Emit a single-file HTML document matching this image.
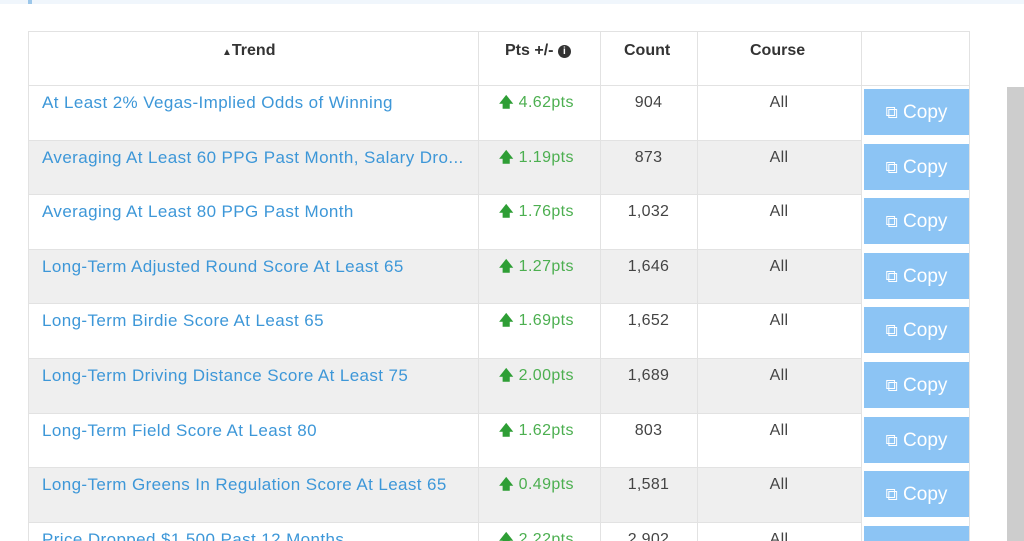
<!DOCTYPE html>
<html style="overflow:hidden"><head><style>
html,body{margin:0;width:1024px;height:541px;overflow:hidden}
body{background:#fff;font-family:"Liberation Sans",sans-serif;position:relative}
.top{position:absolute;left:0;top:0;width:1024px;height:4px;background:#f0f6fc}
.acc{position:absolute;left:28px;top:0;width:4px;height:4px;background:#9cc7ea}
.vl{position:absolute;top:31px;width:1px;height:510px;background:#e2e2e2}
.hl{position:absolute;left:28px;width:942px;height:1px;background:#e2e2e2}
.stripe{position:absolute;left:29px;width:832px;height:54px;background:#efefef}
.t{position:absolute;font-size:16px;white-space:nowrap}
.h{font-weight:bold;color:#333;font-size:16px;top:42px}
.lnk{color:#3d97d8;left:42px;font-size:17px;letter-spacing:0.4px}
.pts{color:#4caf50;left:499px;letter-spacing:0.4px}
.pts b{color:#2e9e35;font-size:14px}
.c{color:#444;text-align:center;letter-spacing:0.3px}
.btn{position:absolute;left:864px;width:105px;height:46px;background:#8cc4f4;color:#fff;font-size:19px;line-height:48px;text-align:center}
.sb{position:absolute;left:1007px;top:87px;width:17px;height:454px;background:#cdcdcd}
</style></head><body>
<div class="top"></div><div class="acc"></div>
<div class="hl" style="top:31px"></div>
<div class="hl" style="top:85px"></div>
<div class="stripe" style="top:141px"></div>
<div class="stripe" style="top:250px"></div>
<div class="stripe" style="top:359px"></div>
<div class="stripe" style="top:468px"></div>
<div class="vl" style="left:28px"></div>
<div class="vl" style="left:478px"></div>
<div class="vl" style="left:600px"></div>
<div class="vl" style="left:697px"></div>
<div class="vl" style="left:861px"></div>
<div class="vl" style="left:969px"></div>
<div class="sb"></div>
<div class="t h" style="left:222px"><span style="font-size:10px">▲</span>Trend</div>
<div class="t h" style="left:505px">Pts +/- <span style="display:inline-block;width:13px;height:13px;border-radius:50%;background:#333;color:#fff;font-size:10px;line-height:13px;text-align:center;vertical-align:1px">i</span></div>
<div class="t h" style="left:624px">Count</div>
<div class="t h" style="left:750px">Course</div>
<div id="rows"></div>
<script>
var d=[["At Least 2% Vegas-Implied Odds of Winning","4.62","904"],["Averaging At Least 60 PPG Past Month, Salary Dro...","1.19","873"],["Averaging At Least 80 PPG Past Month","1.76","1,032"],["Long-Term Adjusted Round Score At Least 65","1.27","1,646"],["Long-Term Birdie Score At Least 65","1.69","1,652"],["Long-Term Driving Distance Score At Least 75","2.00","1,689"],["Long-Term Field Score At Least 80","1.62","803"],["Long-Term Greens In Regulation Score At Least 65","0.49","1,581"],["Price Dropped $1,500 Past 12 Months","2.22","2,902"]];
var h="";
d.forEach(function(r,i){var y=86+i*54.6;var ty=Math.round(y+8);
h+='<div class="t lnk" style="top:'+(ty-1)+'px">'+r[0]+'</div>';
h+='<div class="t pts" style="top:'+(ty-2)+'px"><b>🡅</b> '+r[1]+'pts</div>';
h+='<div class="t c" style="top:'+ty+'px;left:600px;width:97px">'+r[2]+'</div>';
h+='<div class="t c" style="top:'+ty+'px;left:697px;width:164px">All</div>';
h+='<div class="btn" style="top:'+Math.round(y+3)+'px"><span style="font-size:17px">⧉</span> Copy</div>';
if(i>0)h+='<div class="hl" style="top:'+Math.round(y-1)+'px;width:833px"></div>';});
document.getElementById("rows").innerHTML=h;
</script>
</body></html>
